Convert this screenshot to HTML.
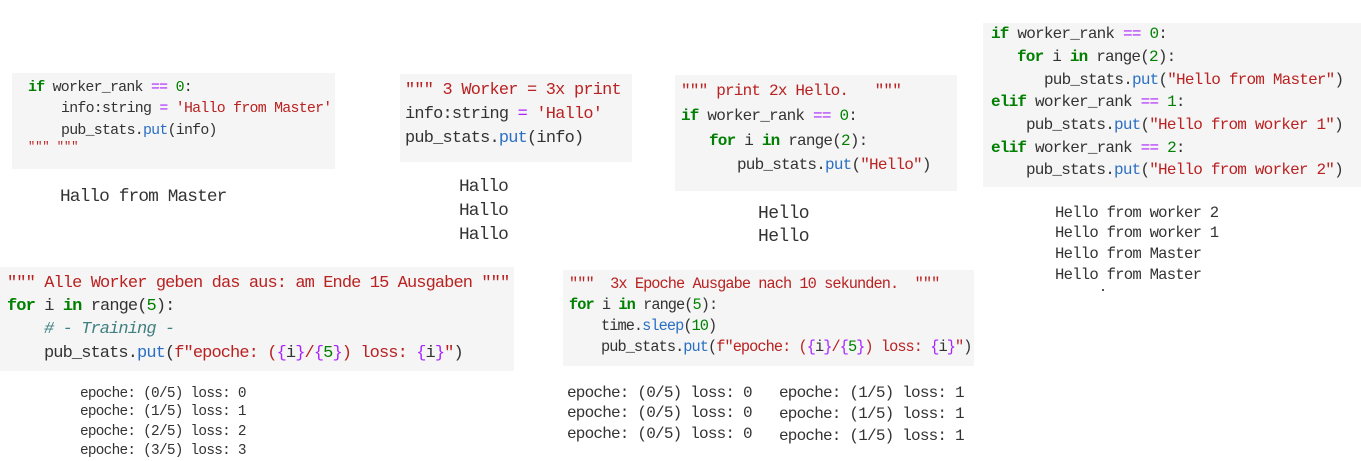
<!DOCTYPE html>
<html><head><meta charset="utf-8"><style>
body{margin:0;width:1361px;height:458px;background:#fff;position:relative;overflow:hidden;font-family:"Liberation Mono",monospace;color:#333}
.bx{position:absolute;background:#f5f5f5}
.l{position:absolute;white-space:pre;line-height:20px;height:20px}
.k{color:#008000;font-weight:bold}.s{color:#ba2121}.o{color:#aa22ff}.n{color:#008000}.f{color:#2a6fc4}.c{color:#408080;font-style:italic}
.a{font-size:14.9px;letter-spacing:-0.74px}
.b{font-size:16.9px;letter-spacing:-0.75px}
.d{font-size:16px;letter-spacing:-0.8px}
.e{font-size:17px;letter-spacing:-0.9px}
.g{font-size:15.3px;letter-spacing:-0.95px}
.o1{font-size:17.8px;letter-spacing:-0.88px}
.o2{font-size:18px;letter-spacing:-0.6px}
.o3{font-size:15.6px;letter-spacing:-0.76px}
.o4{font-size:14.4px;letter-spacing:-0.74px}
.o5{font-size:16px;letter-spacing:-0.8px}
</style></head><body>
<div class="bx" style="left:12px;top:73px;width:323px;height:96px"></div>
<div class="bx" style="left:400px;top:74px;width:232px;height:88px"></div>
<div class="bx" style="left:675px;top:75px;width:282px;height:116px"></div>
<div class="bx" style="left:983px;top:23px;width:378px;height:164px"></div>
<div class="bx" style="left:0px;top:267px;width:514px;height:104px"></div>
<div class="bx" style="left:563px;top:270px;width:411px;height:96px"></div>

<div class="l a" style="left:28px;top:78px"><span class="k">if</span> worker_rank <span class="o">==</span> <span class="n">0</span>:</div>
<div class="l a" style="left:61px;top:99px">info:string <span class="o">=</span> <span class="s">'Hallo from Master'</span></div>
<div class="l a" style="left:61px;top:121px">pub_stats.<span class="f">put</span>(info)</div>
<div class="l a" style="left:28px;top:137px;font-size:12px;letter-spacing:0"><span class="s">""" """</span></div>
<div class="l o1" style="left:60px;top:187px">Hallo from Master</div>

<div class="l b" style="left:405px;top:81px"><span class="s">""" 3 Worker = 3x print</span></div>
<div class="l b" style="left:405px;top:105px">info:string <span class="o">=</span> <span class="s">'Hallo'</span></div>
<div class="l b" style="left:405px;top:129px">pub_stats.<span class="f">put</span>(info)</div>
<div class="l o1" style="left:459px;top:177px">Hallo</div>
<div class="l o1" style="left:459px;top:201px">Hallo</div>
<div class="l o1" style="left:459px;top:225px">Hallo</div>

<div class="l d" style="left:681px;top:81px"><span class="s">""" print 2x Hello.   """</span></div>
<div class="l d" style="left:681px;top:106px"><span class="k">if</span> worker_rank <span class="o">==</span> <span class="n">0</span>:</div>
<div class="l d" style="left:709px;top:131px"><span class="k">for</span> i <span class="k">in</span> range(<span class="n">2</span>):</div>
<div class="l d" style="left:737px;top:155px">pub_stats.<span class="f">put</span>(<span class="s">"Hello"</span>)</div>
<div class="l o2" style="left:758px;top:204px">Hello</div>
<div class="l o2" style="left:758px;top:227px">Hello</div>

<div class="l d" style="left:991px;top:24px"><span class="k">if</span> worker_rank <span class="o">==</span> <span class="n">0</span>:</div>
<div class="l d" style="left:1017px;top:47px"><span class="k">for</span> i <span class="k">in</span> range(<span class="n">2</span>):</div>
<div class="l d" style="left:1044px;top:70px">pub_stats.<span class="f">put</span>(<span class="s">"Hello from Master"</span>)</div>
<div class="l d" style="left:991px;top:92px"><span class="k">elif</span> worker_rank <span class="o">==</span> <span class="n">1</span>:</div>
<div class="l d" style="left:1026px;top:115px">pub_stats.<span class="f">put</span>(<span class="s">"Hello from worker 1"</span>)</div>
<div class="l d" style="left:991px;top:138px"><span class="k">elif</span> worker_rank <span class="o">==</span> <span class="n">2</span>:</div>
<div class="l d" style="left:1026px;top:160px">pub_stats.<span class="f">put</span>(<span class="s">"Hello from worker 2"</span>)</div>
<div class="l o3" style="left:1055px;top:203px">Hello from worker 2</div>
<div class="l o3" style="left:1055px;top:223px">Hello from worker 1</div>
<div class="l o3" style="left:1055px;top:244px">Hello from Master</div>
<div class="l o3" style="left:1055px;top:265px">Hello from Master</div>
<div style="position:absolute;left:1102px;top:289px;width:2px;height:2px;background:#555"></div>

<div class="l e" style="left:7px;top:274px"><span class="s">""" Alle Worker geben das aus: am Ende 15 Ausgaben """</span></div>
<div class="l e" style="left:7px;top:297px"><span class="k">for</span> i <span class="k">in</span> range(<span class="n">5</span>):</div>
<div class="l e" style="left:44px;top:320px"><span class="c"># - Training -</span></div>
<div class="l e" style="left:44px;top:344px">pub_stats.<span class="f">put</span>(<span class="s">f"epoche: (</span><span class="o">{</span>i<span class="o">}</span><span class="s">/</span><span class="o">{</span><span class="n">5</span><span class="o">}</span><span class="s">) loss: </span><span class="o">{</span>i<span class="o">}</span><span class="s">"</span>)</div>
<div class="l o4" style="left:80px;top:384px">epoche: (0/5) loss: 0</div>
<div class="l o4" style="left:80px;top:402px">epoche: (1/5) loss: 1</div>
<div class="l o4" style="left:80px;top:422px">epoche: (2/5) loss: 2</div>
<div class="l o4" style="left:80px;top:441px">epoche: (3/5) loss: 3</div>

<div class="l g" style="left:569px;top:274px"><span class="s">"""  3x Epoche Ausgabe nach 10 sekunden.  """</span></div>
<div class="l g" style="left:569px;top:295px"><span class="k">for</span> i <span class="k">in</span> range(<span class="n">5</span>):</div>
<div class="l g" style="left:601px;top:316px">time.<span class="f">sleep</span>(<span class="n">10</span>)</div>
<div class="l g" style="left:601px;top:337px">pub_stats.<span class="f">put</span>(<span class="s">f"epoche: (</span><span class="o">{</span>i<span class="o">}</span><span class="s">/</span><span class="o">{</span><span class="n">5</span><span class="o">}</span><span class="s">) loss: </span><span class="o">{</span>i<span class="o">}</span><span class="s">"</span>)</div>
<div class="l o5" style="left:567px;top:383px">epoche: (0/5) loss: 0</div>
<div class="l o5" style="left:567px;top:403px">epoche: (0/5) loss: 0</div>
<div class="l o5" style="left:567px;top:424px">epoche: (0/5) loss: 0</div>
<div class="l o5" style="left:779px;top:383px">epoche: (1/5) loss: 1</div>
<div class="l o5" style="left:779px;top:404px">epoche: (1/5) loss: 1</div>
<div class="l o5" style="left:779px;top:426px">epoche: (1/5) loss: 1</div>
</body></html>
